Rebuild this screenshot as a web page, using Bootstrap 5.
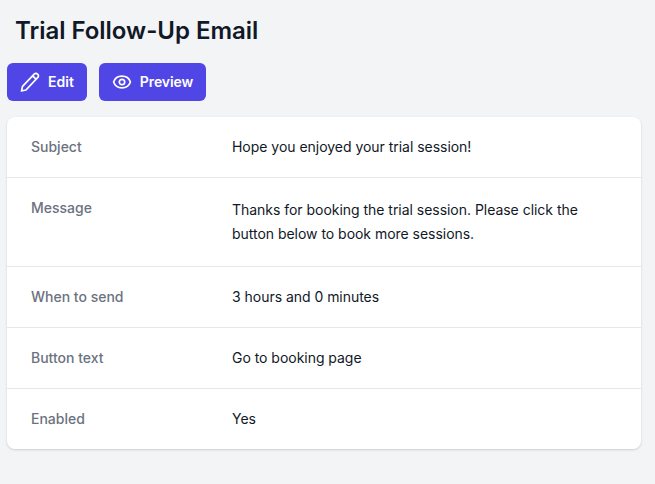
<!DOCTYPE html>
<html lang="en"><head><meta charset="utf-8">
<link href="https://cdn.jsdelivr.net/npm/bootstrap@5.3.0/dist/css/bootstrap.min.css" rel="stylesheet">
<style>
html,body{height:100%;overflow:hidden}
body{background:#f3f4f6;font-family:Inter,"Liberation Sans",sans-serif;color:#111827;font-size:14px;padding:0 14px 0 7px}
.page-title{font-size:24px;font-weight:600;line-height:32px;color:#111827;margin:15px 0 16px 8px;letter-spacing:-.03px}
.act-btn{background:#4f46e5;color:#fff;border:0;border-radius:6px;height:38px;font-size:14px;font-weight:600;line-height:20px;display:inline-flex;align-items:center;gap:8px;padding:0 13px}
.act-btn:hover{background:#4f46e5;color:#fff}
.act-prev{letter-spacing:-.1px}
.info-card{background:#fff;border:0;border-radius:8px;box-shadow:0 1px 3px rgba(0,0,0,.1),0 1px 2px rgba(0,0,0,.06);margin-top:16px}
.info-row{display:flex;padding:20px 24px;line-height:20px;border-bottom:1px solid #e5e7eb}
.info-row:last-child{border-bottom:0}
.info-key{width:201px;flex:none;color:#6b7280;font-weight:500}
.info-val{flex:1;letter-spacing:-.03px}
.info-long{line-height:24px;height:48px}
</style></head><body>
<h1 class="page-title">Trial Follow-Up Email</h1>
<div class="d-flex" style="gap:12px">
<a class="btn act-btn" href="#"><svg width="20" height="20" viewBox="0 0 20 20" fill="none" stroke="currentColor" stroke-width="1.7" stroke-linecap="round" stroke-linejoin="round"><path d="M12.600 3.800l3.400 3.400M14.200 2.200a2.300 2.300 0 0 1 3.400 3.400L6 18l-4.500 1 1-4.600L14.200 2.200z"/></svg>Edit</a>
<a class="btn act-btn act-prev" href="#"><svg width="20" height="20" viewBox="0 0 20 20" fill="none" stroke="currentColor" stroke-width="1.7" stroke-linecap="round" stroke-linejoin="round"><circle cx="10" cy="10" r="2.700"/><path d="M1.600 10C2.800 6.500 6 4.200 10 4.200s7.200 2.300 8.400 5.800c-1.200 3.500-4.400 5.800-8.400 5.800S2.800 13.500 1.600 10z"/></svg>Preview</a>
</div>
<div class="card info-card">
<div class="info-row"><div class="info-key">Subject</div><div class="info-val">Hope you enjoyed your trial session!</div></div>
<div class="info-row"><div class="info-key">Message</div><div class="info-val info-long">Thanks for booking the trial session. Please click the button below to book more sessions.</div></div>
<div class="info-row"><div class="info-key">When to send</div><div class="info-val">3 hours and 0 minutes</div></div>
<div class="info-row"><div class="info-key">Button text</div><div class="info-val">Go to booking page</div></div>
<div class="info-row"><div class="info-key">Enabled</div><div class="info-val">Yes</div></div>
</div>
</body></html>
